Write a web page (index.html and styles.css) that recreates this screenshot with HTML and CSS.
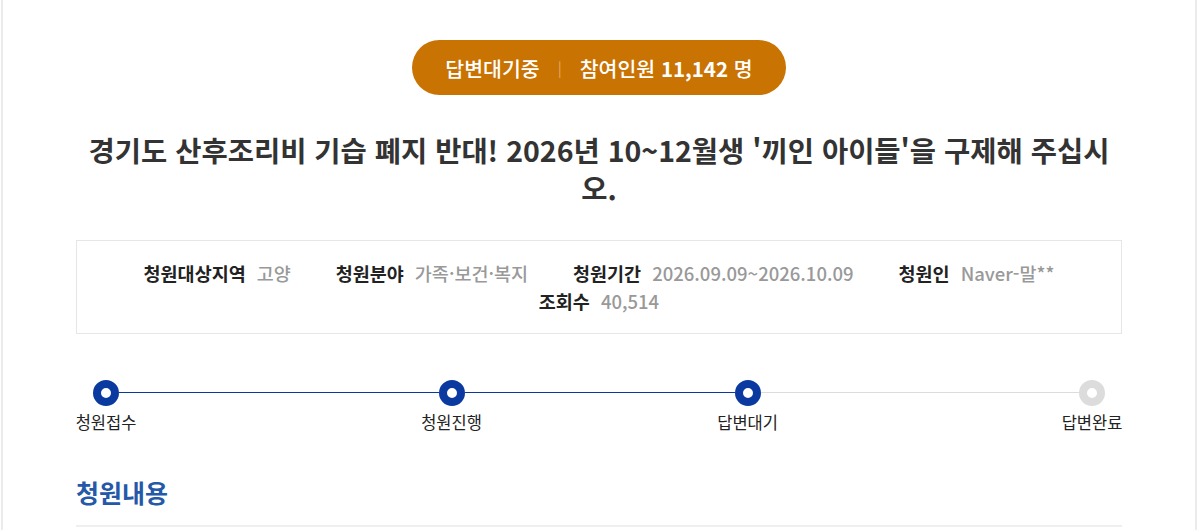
FILE: index.html
```html
<!DOCTYPE html>
<html lang="ko">
<head>
<meta charset="utf-8">
<title>청원</title>
<link rel="stylesheet" href="styles.css">
</head>
<body>
<div class="wrap">
  <div class="badge-row">
    <div class="badge">
      <span class="status">답변대기중</span>
      <span class="sep">|</span>
      <span class="count">참여인원 <b>11,142</b> 명</span>
    </div>
  </div>
  <h1 class="title">경기도 산후조리비 기습 폐지 반대! 2026년 10~12월생 '끼인 아이들'을 구제해 주십시오.</h1>
  <div class="info">
    <div class="item"><span class="k">청원대상지역</span><span class="v">고양</span></div>
    <div class="item"><span class="k">청원분야</span><span class="v">가족·보건·복지</span></div>
    <div class="item"><span class="k">청원기간</span><span class="v">2026.09.09~2026.10.09</span></div>
    <div class="item"><span class="k">청원인</span><span class="v">Naver-말**</span></div>
    <div class="item"><span class="k">조회수</span><span class="v">40,514</span></div>
  </div>
  <div class="progress">
    <div class="step"><span class="dot"></span><span class="lbl">청원접수</span></div>
    <div class="bar done b1"></div>
    <div class="step"><span class="dot"></span><span class="lbl">청원진행</span></div>
    <div class="bar done b2"></div>
    <div class="step"><span class="dot"></span><span class="lbl">답변대기</span></div>
    <div class="bar b3"></div>
    <div class="step todo"><span class="dot"></span><span class="lbl">답변완료</span></div>
  </div>
  <h2 class="section">청원내용</h2>
</div>
</body>
</html>
```

FILE: styles.css
```css
* { box-sizing: border-box; }
html, body { margin: 0; padding: 0; background: #fff; }
body {
  font-family: "Noto Sans CJK KR", "Noto Sans", sans-serif;
  color: #333;
  overflow: hidden;
}
.wrap {
  margin-left: 1px;
  width: 1196px;
  min-height: 530px;
  border-left: 2px solid #ececec;
  border-right: 2px solid #ececec;
  padding: 40px 73px 0;
}
.badge-row { display: flex; justify-content: center; }
.badge {
  display: flex;
  align-items: center;
  height: 55px;
  padding: 0 33px;
  border-radius: 28px;
  background: #c97303;
  color: #fff;
  font-size: 20.5px;
  font-weight: 500;
}
.badge .sep {
  margin: 0 18px;
  color: #e5a85a;
  font-size: 15px;
  font-weight: 400;
}
.badge b { font-weight: 700; }
.title {
  margin: 36px 0 0;
  padding: 0 12px;
  text-align: center;
  font-size: 28.5px;
  line-height: 38px;
  font-weight: 700;
  color: #333;
}
.info {
  margin-top: 33px;
  border: 1px solid #e6e6e6;
  padding: 18px 30px 18px;
  display: flex;
  flex-wrap: wrap;
  justify-content: center;
  column-gap: 45px;
  font-size: 18.5px;
  line-height: 28px;
}
.item { display: flex; gap: 11px; }
.k { font-weight: 700; color: #222; }
.v { font-weight: 500; color: #999; }
.progress {
  margin-top: 46px;
  display: flex;
  align-items: flex-start;
}
.step {
  width: 60px;
  flex: none;
  display: flex;
  flex-direction: column;
  align-items: center;
  gap: 5px;
}
.dot {
  position: relative;
  z-index: 1;
  width: 26px;
  height: 26px;
  border-radius: 50%;
  border: 8px solid #0a3aa0;
  background: #fff;
}
.step.todo .dot { border-color: #dcdcdc; }
.lbl {
  font-size: 16.5px;
  line-height: 22px;
  color: #222;
  white-space: nowrap;
}
.bar {
  height: 1px;
  margin: 12px -17px 0;
  background: #dcdcdc;
}
.bar.done { background: #0a3aa0; }
.b1 { flex: 284; }
.b2 { flex: 240; }
.b3 { flex: 283; }
.section {
  margin: 42px 0 0;
  padding-bottom: 16px;
  border-bottom: 2px solid #efefef;
  font-size: 25px;
  line-height: 34px;
  font-weight: 700;
  color: #2559a8;
}
```
